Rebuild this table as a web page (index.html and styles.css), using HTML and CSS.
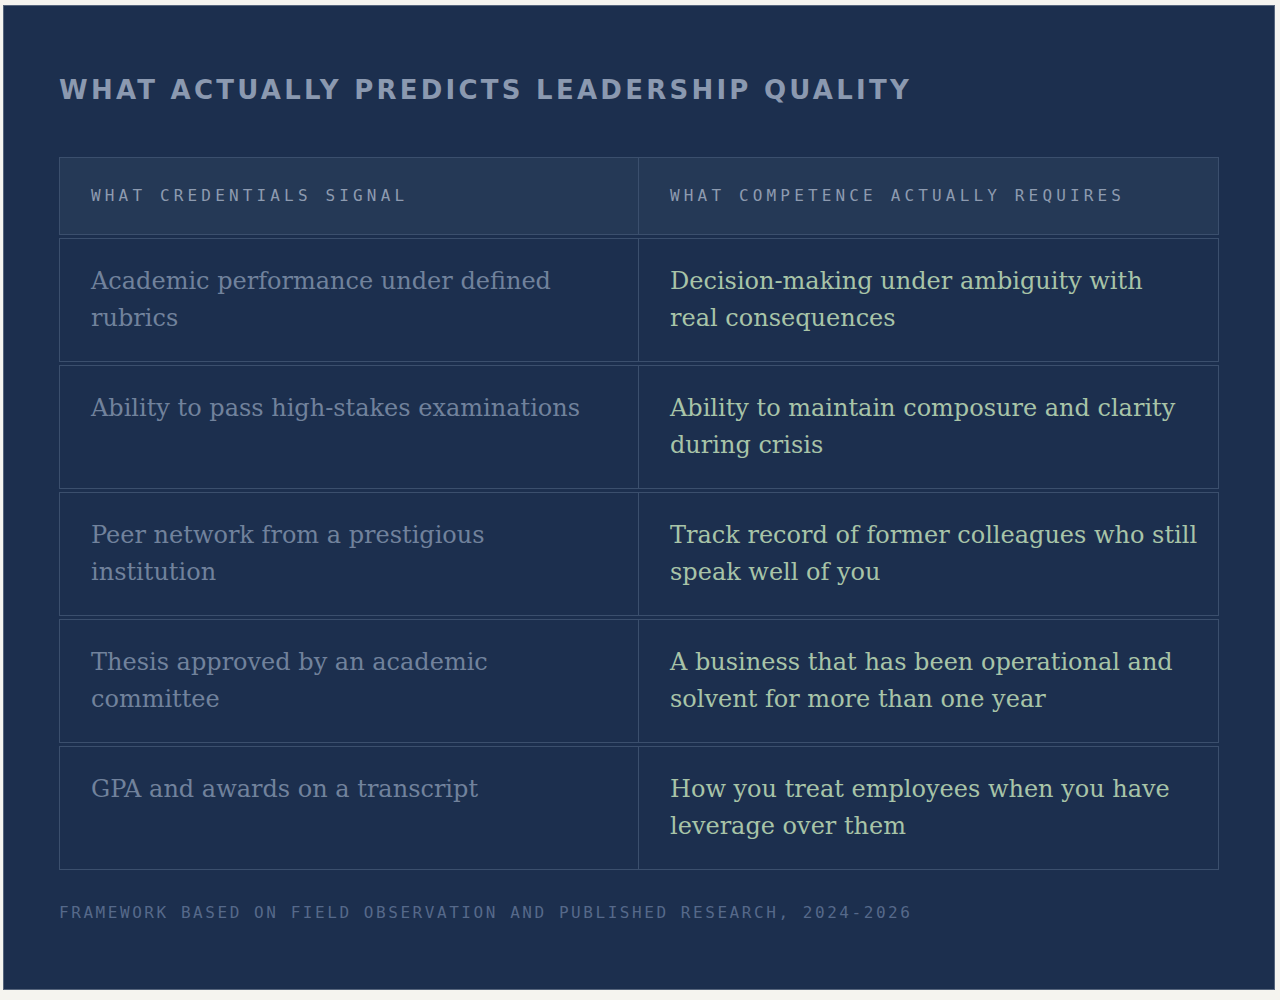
FILE: index.html
```html
<!DOCTYPE html>
<html lang="en">
<head>
<meta charset="utf-8">
<title>What actually predicts leadership quality</title>
<link rel="stylesheet" href="styles.css">
</head>
<body>
<main class="page">
  <section class="panel">
    <h1 class="title">WHAT ACTUALLY PREDICTS LEADERSHIP QUALITY</h1>
    <div class="table">
      <div class="row head">
        <div class="cell">WHAT CREDENTIALS SIGNAL</div>
        <div class="cell">WHAT COMPETENCE ACTUALLY REQUIRES</div>
      </div>
      <div class="row">
        <div class="cell cred">Academic performance under defined rubrics</div>
        <div class="cell comp">Decision-making under ambiguity with <span class="nw">real consequences</span></div>
      </div>
      <div class="row">
        <div class="cell cred">Ability to pass high-stakes examinations</div>
        <div class="cell comp">Ability to maintain composure and clarity during crisis</div>
      </div>
      <div class="row">
        <div class="cell cred">Peer network from a prestigious institution</div>
        <div class="cell comp">Track record of former colleagues who still speak well of you</div>
      </div>
      <div class="row">
        <div class="cell cred">Thesis approved by an academic committee</div>
        <div class="cell comp">A business that has been operational and solvent for more than one year</div>
      </div>
      <div class="row">
        <div class="cell cred">GPA and awards on a transcript</div>
        <div class="cell comp">How you treat employees when you have leverage over them</div>
      </div>
    </div>
    <p class="footer">FRAMEWORK BASED ON FIELD OBSERVATION AND PUBLISHED RESEARCH, 2024-2026</p>
  </section>
</main>
</body>
</html>
```

FILE: styles.css
```css
* { box-sizing: border-box; }

html, body {
  margin: 0;
  padding: 0;
  background: #f5f4ef;
}

.page {
  padding: 5px 5px 0 3px;
}

.panel {
  background: #1c2f4e;
  border: 1px solid #56657c;
  padding: 66px 55px 66px 55px;
}

.title {
  margin: 0 0 49px 0;
  font-family: "DejaVu Sans", sans-serif;
  font-weight: 700;
  font-size: 26px;
  line-height: 36px;
  letter-spacing: 0.125em;
  color: #8b99b0;
}

.table {
  display: flex;
  flex-direction: column;
  gap: 3px;
}

.row {
  display: grid;
  grid-template-columns: 578px 1fr;
  border: 1px solid #3b4f6d;
}

.cell {
  padding: 24px 31px;
  font-family: "DejaVu Serif", serif;
  font-size: 24px;
  line-height: 37px;
}

.cell + .cell {
  border-left: 1px solid #3b4f6d;
}

.row.head {
  background: #253956;
}

.row.head .cell {
  padding: 28px 31px;
  font-family: "DejaVu Sans Mono", monospace;
  font-size: 16px;
  line-height: 20px;
  letter-spacing: 0.26em;
  color: #8e9bb0;
}

.cred {
  color: #71829c;
}

.comp {
  color: #a8c4a8;
  padding-right: 14px;
}

.nw {
  white-space: nowrap;
}

.footer {
  margin: 33px 0 0 0;
  font-family: "DejaVu Sans Mono", monospace;
  font-size: 16px;
  line-height: 20px;
  letter-spacing: 0.16em;
  color: #56698a;
}
```
